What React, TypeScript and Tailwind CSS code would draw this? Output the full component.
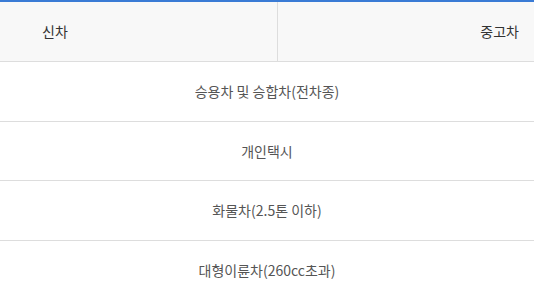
const rows = [
  { label: '승용차 및 승합차(전차종)', h: 'h-[60px]' },
  { label: '개인택시', h: 'h-[59px]' },
  { label: '화물차(2.5톤 이하)', h: 'h-[60px]' },
  { label: '대형이륜차(260cc초과)', h: 'h-[60px]' },
];

export default function App() {
  return (
    <div
      className="w-[534px] h-[294px] overflow-hidden bg-white text-[14px]"
      style={{ fontFamily: '"Noto Sans CJK KR", "Noto Sans", sans-serif' }}
    >
      <div className="flex h-[62px] border-t-2 border-b border-t-[#3a7bd5] border-b-[#dddddd] bg-[#f8f8f8] text-[#333333]">
        <div className="flex w-[278px] items-center border-r border-[#dddddd] pl-[42px]">신차</div>
        <div className="flex flex-1 items-center justify-end pr-[15px]">중고차</div>
      </div>
      {rows.map((r) => (
        <div
          key={r.label}
          className={`flex ${r.h} items-center justify-center border-b border-[#dddddd] text-[#555555]`}
        >
          {r.label}
        </div>
      ))}
    </div>
  );
}
